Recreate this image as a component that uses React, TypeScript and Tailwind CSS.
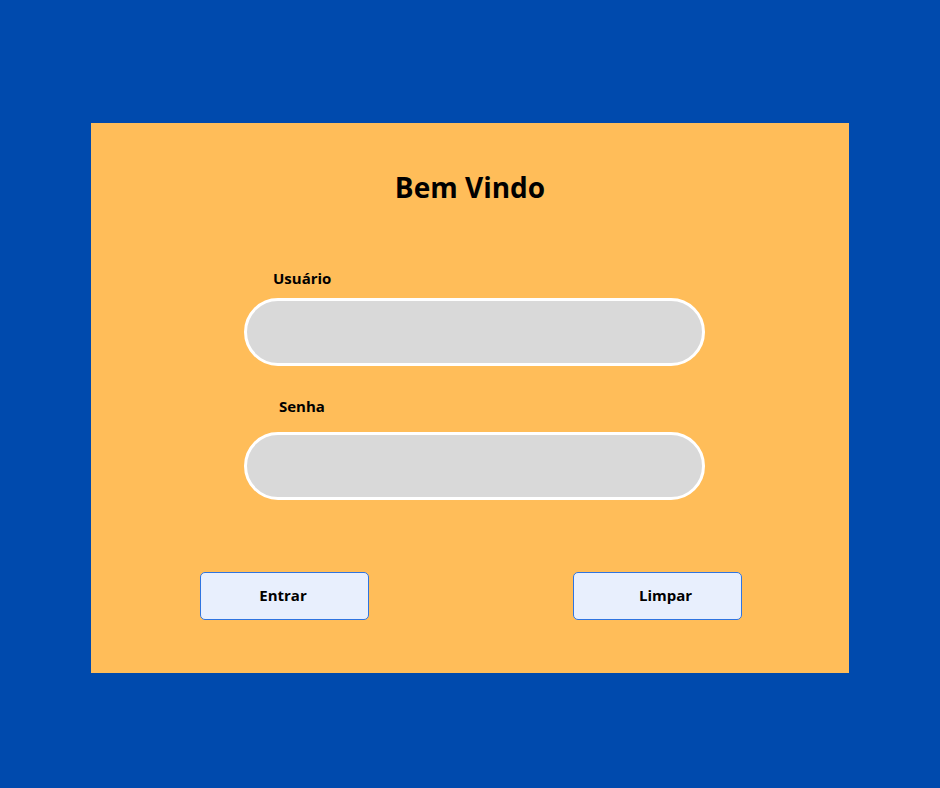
import React from 'react';

const App: React.FC = () => {
  return (
    <div
      className="h-[788px] w-[940px] bg-[#004aad] pt-[123px] pl-[91px]"
      style={{ fontFamily: '"Open Sans", "Noto Sans", sans-serif' }}
    >
      <div className="flex h-[550px] w-[758px] flex-col bg-[#ffbd59] pt-[46px]">
        <h1 className="h-[36px] text-center text-[28px] font-bold leading-[36px] text-black">Bem Vindo</h1>

        <label className="ml-[182px] mt-[63px] h-[20px] text-[15px] font-bold leading-[20px] text-black">Usuário</label>
        <input
          type="text"
          className="ml-[153px] mt-[10px] h-[68px] w-[461px] rounded-full border-[3px] border-white bg-[#d9d9d9] outline-none"
        />

        <label className="ml-[188px] mt-[30px] h-[20px] text-[15px] font-bold leading-[20px] text-black">Senha</label>
        <input
          type="password"
          className="ml-[153px] mt-[16px] h-[68px] w-[461px] rounded-full border-[3px] border-white bg-[#d9d9d9] outline-none"
        />

        <div className="mt-[72px] flex">
          <button className="ml-[109px] h-[48px] w-[169px] rounded-[5px] border border-[#2f74e0] bg-[#e8effd] pr-[3px] pb-[2px] text-[15px] font-bold text-black">
            Entrar
          </button>
          <button className="ml-[204px] h-[48px] w-[169px] rounded-[5px] border border-[#2f74e0] bg-[#e8effd] pl-[16px] pb-[2px] text-[15px] font-bold text-black">
            Limpar
          </button>
        </div>
      </div>
    </div>
  );
};

export default App;
